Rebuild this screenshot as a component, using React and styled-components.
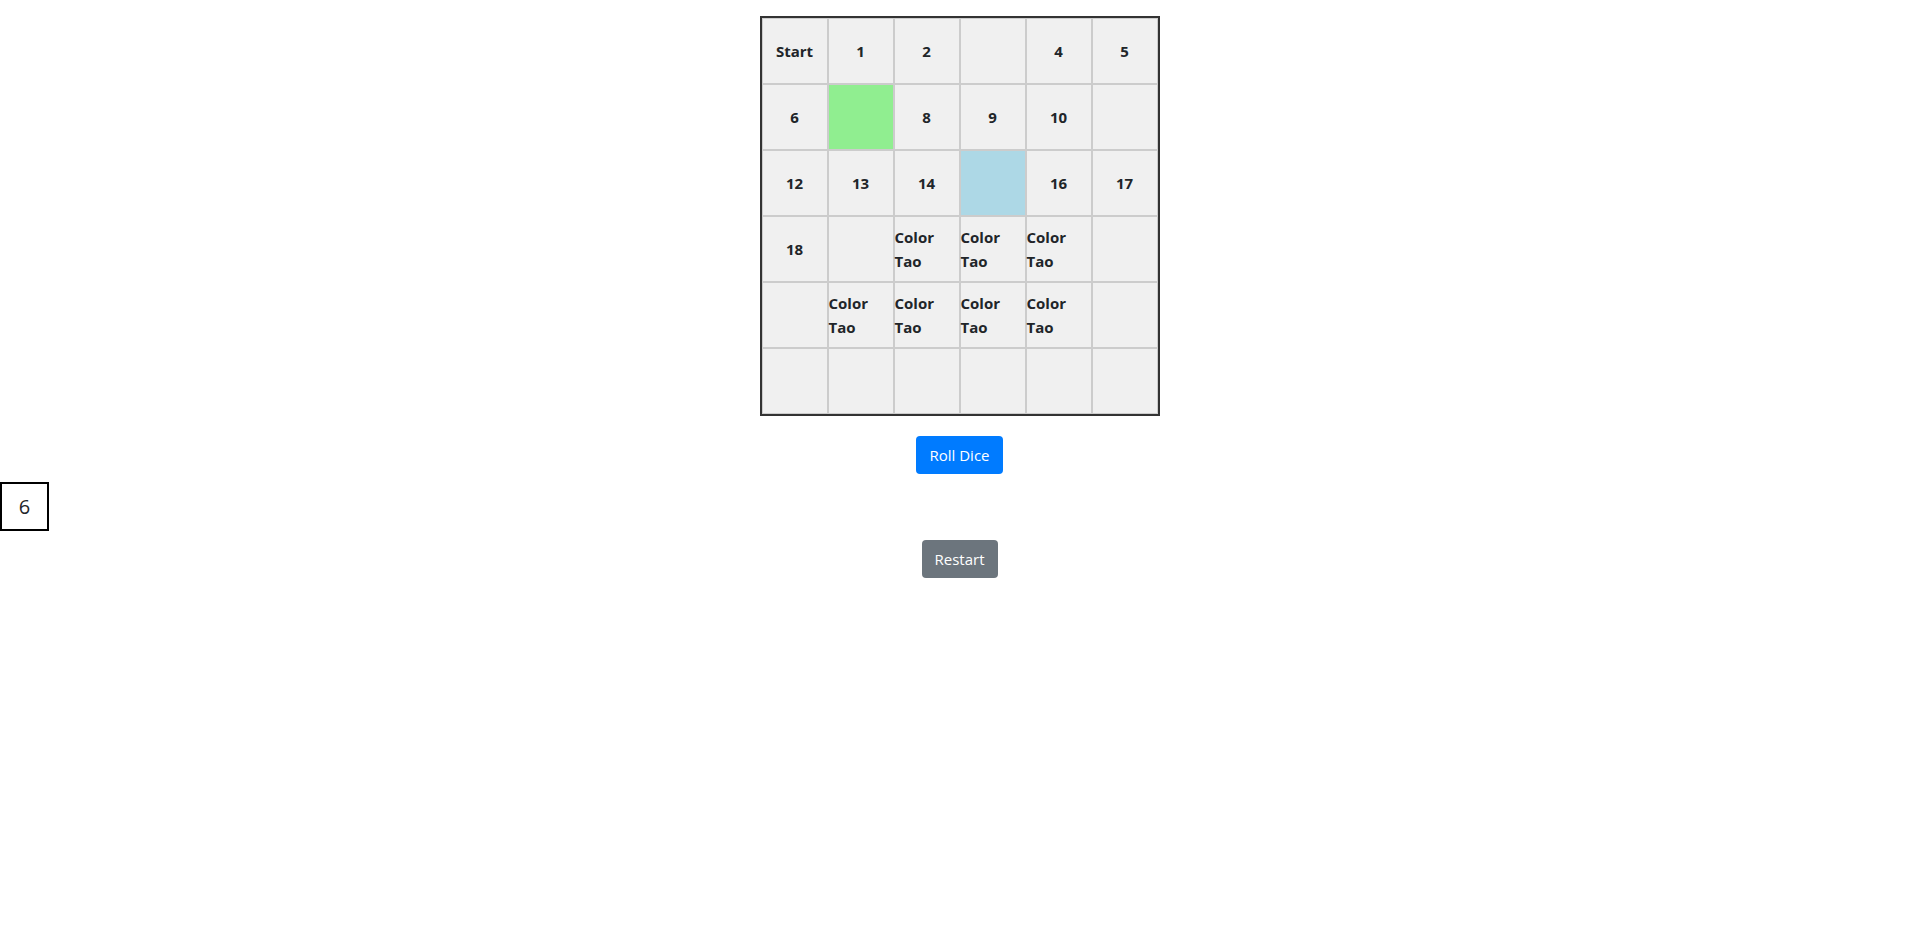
import React, { useState } from 'react'
import styled, { createGlobalStyle } from 'styled-components'

const GlobalStyle = createGlobalStyle`
    body {
        margin: 0;
        font-family: "Segoe UI", "Open Sans", "Liberation Sans", sans-serif;
        font-size: 16px;
        line-height: 1.5;
        color: #212529;
        background: #fff;
    }
`

// board layout, 6 x 6
const cells = [
    'Start', '1', '2', '', '4', '5',
    '6', 'green', '8', '9', '10', '',
    '12', '13', '14', 'blue', '16', '17',
    '18', '', 'Color Tao', 'Color Tao', 'Color Tao', '',
    '', 'Color Tao', 'Color Tao', 'Color Tao', 'Color Tao', '',
    '', '', '', '', '', '',
]

const App = () => {
    const [dice, setDice] = useState(6)

    return (
        <Page>
            <GlobalStyle />
            <Row>
                <Board>
                    {cells.map((c, i) => {
                        if (c === 'green') return <Cell key={i} $bg="#90ee90" />
                        if (c === 'blue') return <Cell key={i} $bg="#add8e6" />
                        return <Cell key={i}>{c}</Cell>
                    })}
                </Board>
            </Row>
            <Row $mt={20}>
                <Button $variant="primary" onClick={() => setDice(Math.floor(Math.random() * 6) + 1)}>
                    Roll Dice
                </Button>
            </Row>
            <Dice>{dice}</Dice>
            <Row $mt={9}>
                <Button $variant="secondary" onClick={() => setDice(6)}>Restart</Button>
            </Row>
        </Page>
    )
}

const Page = styled.div`
    padding-top: 16px;
`

const Row = styled.div`
    display: flex;
    justify-content: center;
    margin-top: ${p => p.$mt || 0}px;
`

const Board = styled.div`
    display: grid;
    grid-template-columns: repeat(6, 66px);
    grid-auto-rows: 66px;
    border: 2px solid #333;
`

const Cell = styled.div`
    display: flex;
    align-items: center;
    justify-content: center;
    box-sizing: border-box;
    border: 1px solid #ccc;
    background-color: ${p => p.$bg || '#f0f0f0'};
    font-weight: bold;
    font-size: 15px;
    line-height: 24px;
`

const Button = styled.button`
    font-family: inherit;
    font-size: 15px;
    line-height: 24px;
    padding: 6px 12px;
    border: 1px solid transparent;
    border-radius: 4px;
    color: #fff;
    background-color: ${p => p.$variant === 'primary' ? '#007bff' : '#6c757d'};
    cursor: pointer;
`

const Dice = styled.div`
    margin-top: 8px;
    width: 45px;
    height: 45px;
    border: 2px solid #000;
    display: flex;
    align-items: center;
    justify-content: center;
    font-size: 20px;
`

export default App
